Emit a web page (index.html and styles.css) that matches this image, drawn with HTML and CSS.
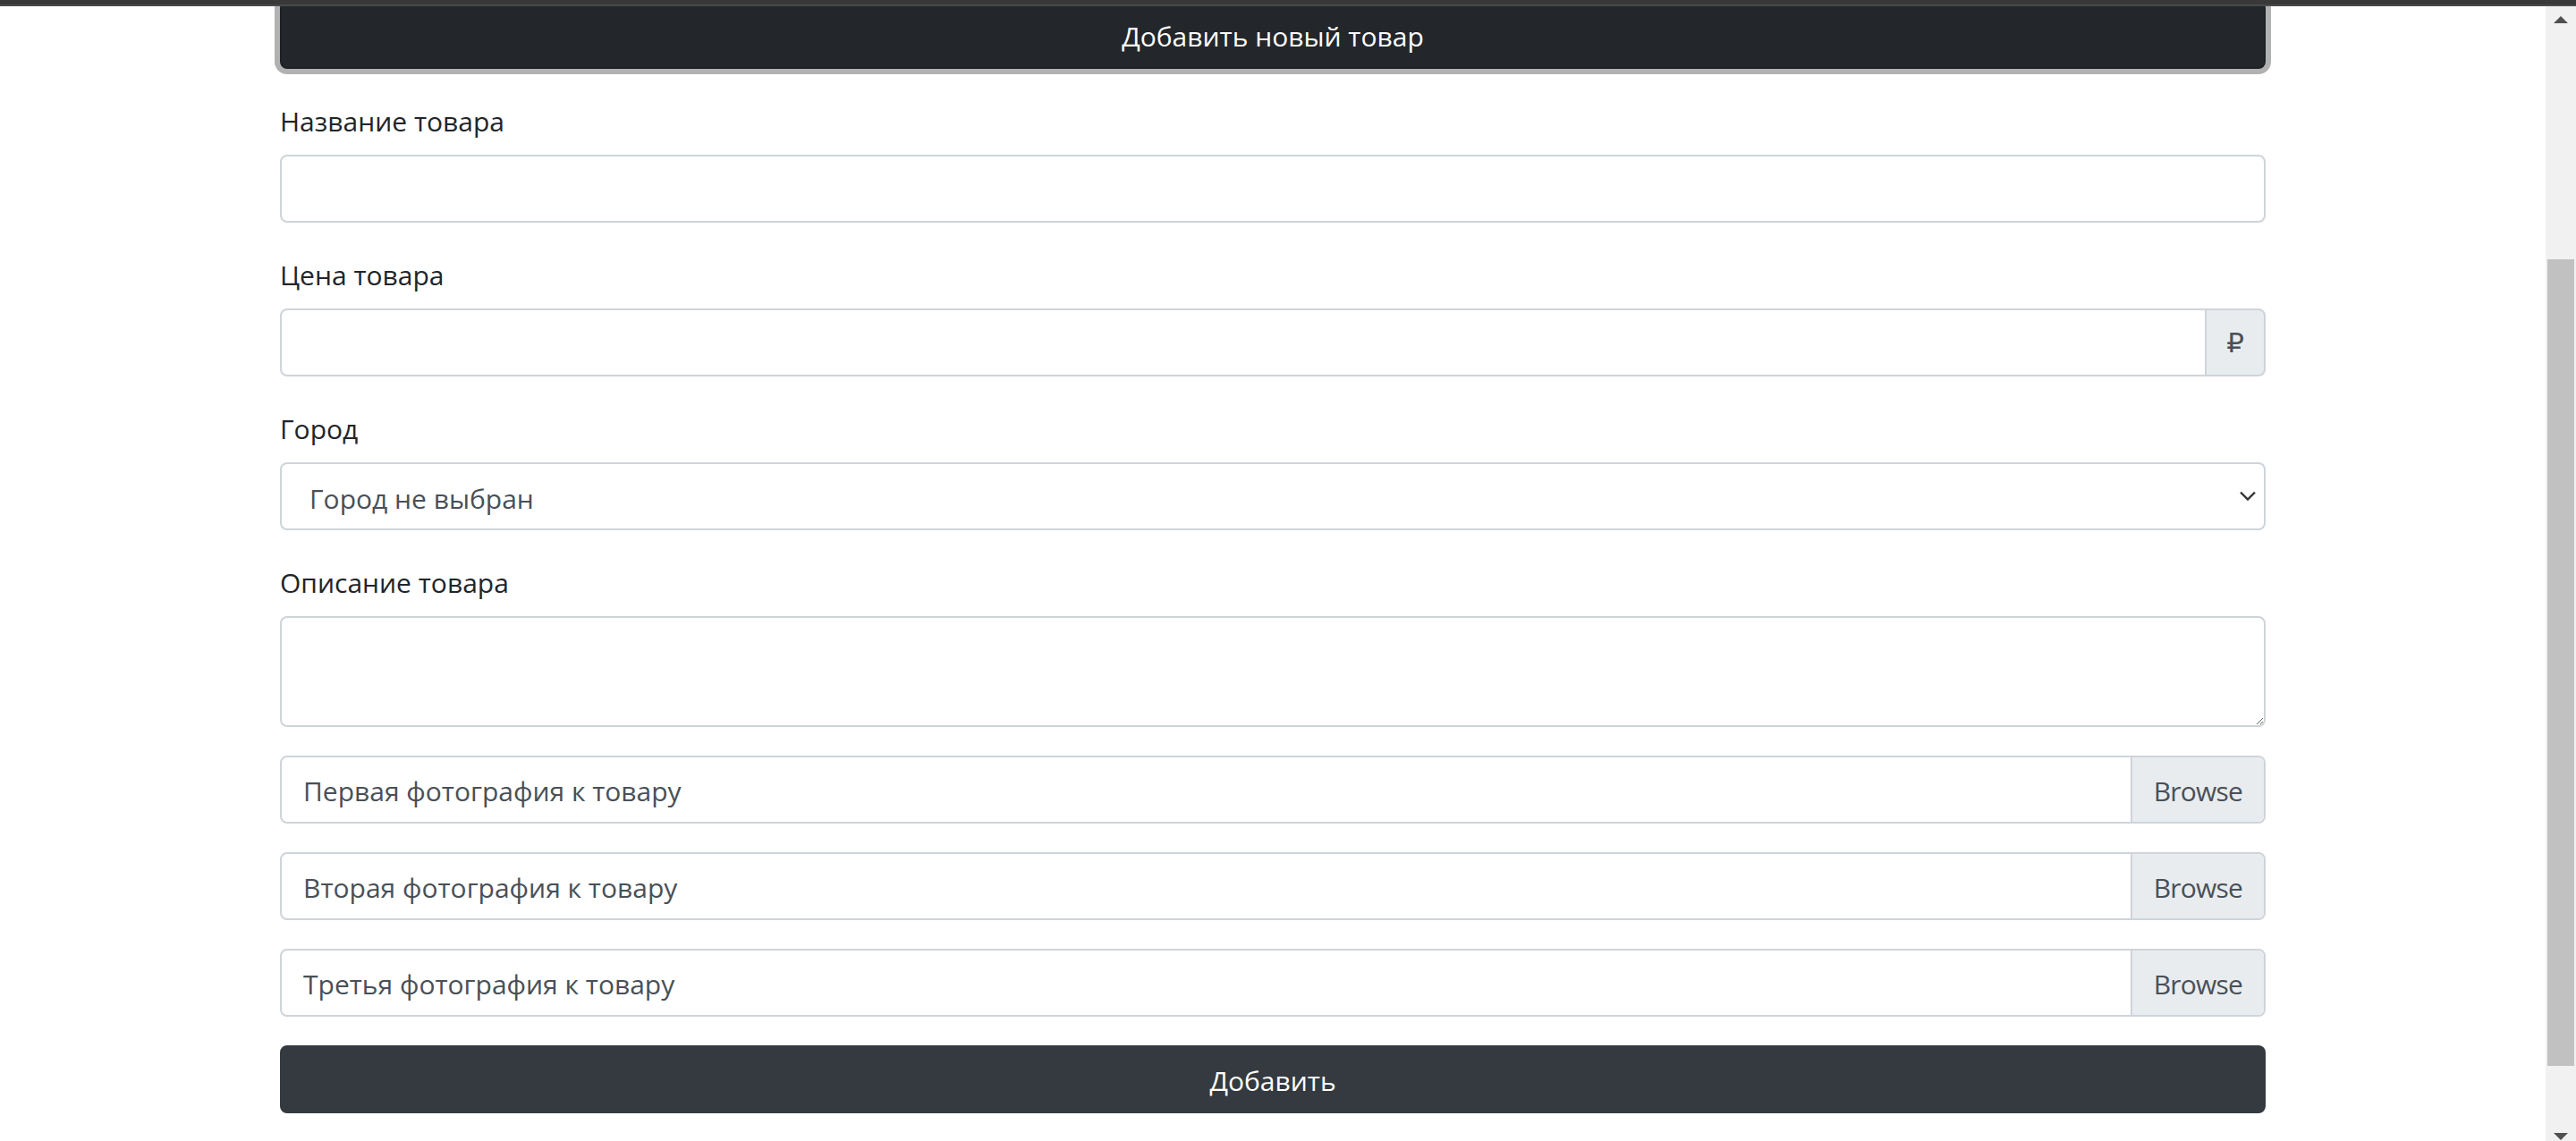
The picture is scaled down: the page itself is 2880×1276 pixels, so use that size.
FILE: index.html
```html
<!DOCTYPE html>
<html lang="ru">
<head>
<meta charset="utf-8">
<title>Добавить новый товар</title>
<link rel="stylesheet" href="styles.css">
</head>
<body>
<div class="topstrip"></div>
<div class="viewport">
  <main class="page">
    <div class="container">
      <button class="btn btn-dark btn-head" type="button">Добавить новый товар</button>
      <form class="form">
        <div class="form-group">
          <label class="form-label">Название товара</label>
          <input class="form-control" type="text">
        </div>
        <div class="form-group">
          <label class="form-label">Цена товара</label>
          <div class="input-group">
            <input class="form-control input-left" type="text">
            <span class="input-addon">₽</span>
          </div>
        </div>
        <div class="form-group">
          <label class="form-label">Город</label>
          <div class="select-wrap">
            <select class="form-control form-select">
              <option>Город не выбран</option>
            </select>
            <svg class="chevron" width="18" height="11" viewBox="0 0 18 11"><path d="M1 1.5 L9 9.5 L17 1.5" fill="none" stroke="#333" stroke-width="2.4"/></svg>
          </div>
        </div>
        <div class="form-group">
          <label class="form-label">Описание товара</label>
          <textarea class="form-control form-textarea"></textarea>
        </div>
        <div class="form-group">
          <div class="custom-file"><span class="file-text">Первая фотография к товару</span><span class="file-browse">Browse</span></div>
        </div>
        <div class="form-group">
          <div class="custom-file"><span class="file-text">Вторая фотография к товару</span><span class="file-browse">Browse</span></div>
        </div>
        <div class="form-group">
          <div class="custom-file"><span class="file-text">Третья фотография к товару</span><span class="file-browse">Browse</span></div>
        </div>
        <button class="btn btn-submit" type="button">Добавить</button>
      </form>
    </div>
  </main>
  <aside class="scrollbar">
    <div class="sb-arrow"><span class="tri-up"></span></div>
    <div class="sb-track">
      <div class="sb-thumb"></div>
    </div>
    <div class="sb-arrow sb-arrow-down"><span class="tri-down"></span></div>
  </aside>
</div>
</body>
</html>
```
FILE: styles.css
```css
* { box-sizing: border-box; }
html, body { margin: 0; padding: 0; }
body {
  font-family: "Open Sans", "DejaVu Sans", sans-serif;
  font-size: 30px;
  line-height: 48px;
  color: #212529;
  background: #fff;
  height: 1276px;
  overflow: hidden;
}
.topstrip {
  position: fixed;
  top: 0; left: 0; right: 0;
  height: 7px;
  background: #393939;
  border-bottom: 2px solid #4a4a4a;
  z-index: 10;
}
.viewport {
  display: flex;
  height: 1276px;
}
.page {
  flex: 1;
  overflow: hidden;
}
.container {
  max-width: 2280px;
  margin: 0 auto;
  padding: 0 30px;
}
.btn {
  display: block;
  width: 100%;
  height: 76px;
  font-family: inherit;
  font-size: 30px;
  line-height: 48px;
  color: #fff;
  border-radius: 8px;
  text-align: center;
  padding: 3px 24px 0;
}
.btn-head {
  margin-top: 1px;
  margin-bottom: 32px;
  background: #23272b;
  border: 2px solid #1d2124;
  box-shadow: 0 0 0 6px #b1b1b1;
}
.btn-submit {
  background: #343a40;
  border: 2px solid #343a40;
}
.form { margin: 0; }
.form-group { margin-bottom: 32px; }
.form-label {
  display: block;
  padding-top: 3px;
  height: 48px;
  margin-bottom: 16px;
}
.form-control {
  display: block;
  width: 100%;
  height: 76px;
  padding: 0 24px;
  font-family: inherit;
  font-size: 30px;
  color: #495057;
  background: #fff;
  border: 2px solid #ced4da;
  border-radius: 8px;
  outline: none;
}
.input-group { display: flex; }
.input-left {
  flex: 1;
  border-top-right-radius: 0;
  border-bottom-right-radius: 0;
}
.input-addon {
  display: flex;
  align-items: center;
  justify-content: center;
  width: 68px;
  margin-left: -2px;
  background: #e9ecef;
  border: 2px solid #ced4da;
  border-radius: 0 8px 8px 0;
  color: #495057;
  font-family: "DejaVu Sans", sans-serif;
  font-size: 31px;
}
.select-wrap { position: relative; }
.form-select {
  appearance: none;
  -webkit-appearance: none;
  padding-left: 31px;
  padding-top: 4px;
}
.chevron {
  position: absolute;
  right: 11px;
  top: 32px;
}
.form-textarea {
  height: 124px;
  padding: 12px 24px;
  resize: vertical;
}
.custom-file {
  display: flex;
  height: 76px;
  border: 2px solid #ced4da;
  border-radius: 8px;
  overflow: hidden;
  color: #495057;
  background: #fff;
}
.file-text {
  flex: 1;
  display: flex;
  align-items: center;
  padding: 4px 24px 0;
}
.file-browse {
  display: flex;
  align-items: center;
  padding: 4px 24px 0;
  letter-spacing: -0.8px;
  background: #e9ecef;
  border-left: 2px solid #ced4da;
}
.scrollbar {
  width: 34px;
  background: #f1f1f1;
  display: flex;
  flex-direction: column;
  padding-top: 7px;
}
.sb-arrow {
  height: 30px;
  display: flex;
  justify-content: center;
  align-items: center;
  flex: none;
}
.sb-arrow-down { height: 16px; align-items: flex-end; padding-bottom: 1px; }
.tri-up {
  width: 0; height: 0;
  border-left: 8px solid transparent;
  border-right: 8px solid transparent;
  border-bottom: 8px solid #505050;
}
.tri-down {
  width: 0; height: 0;
  border-left: 8px solid transparent;
  border-right: 8px solid transparent;
  border-top: 8px solid #505050;
}
.sb-track {
  flex: 1;
  padding: 253px 2px 0 2px;
}
.sb-thumb {
  height: 902px;
  background: #c1c1c1;
}
```
